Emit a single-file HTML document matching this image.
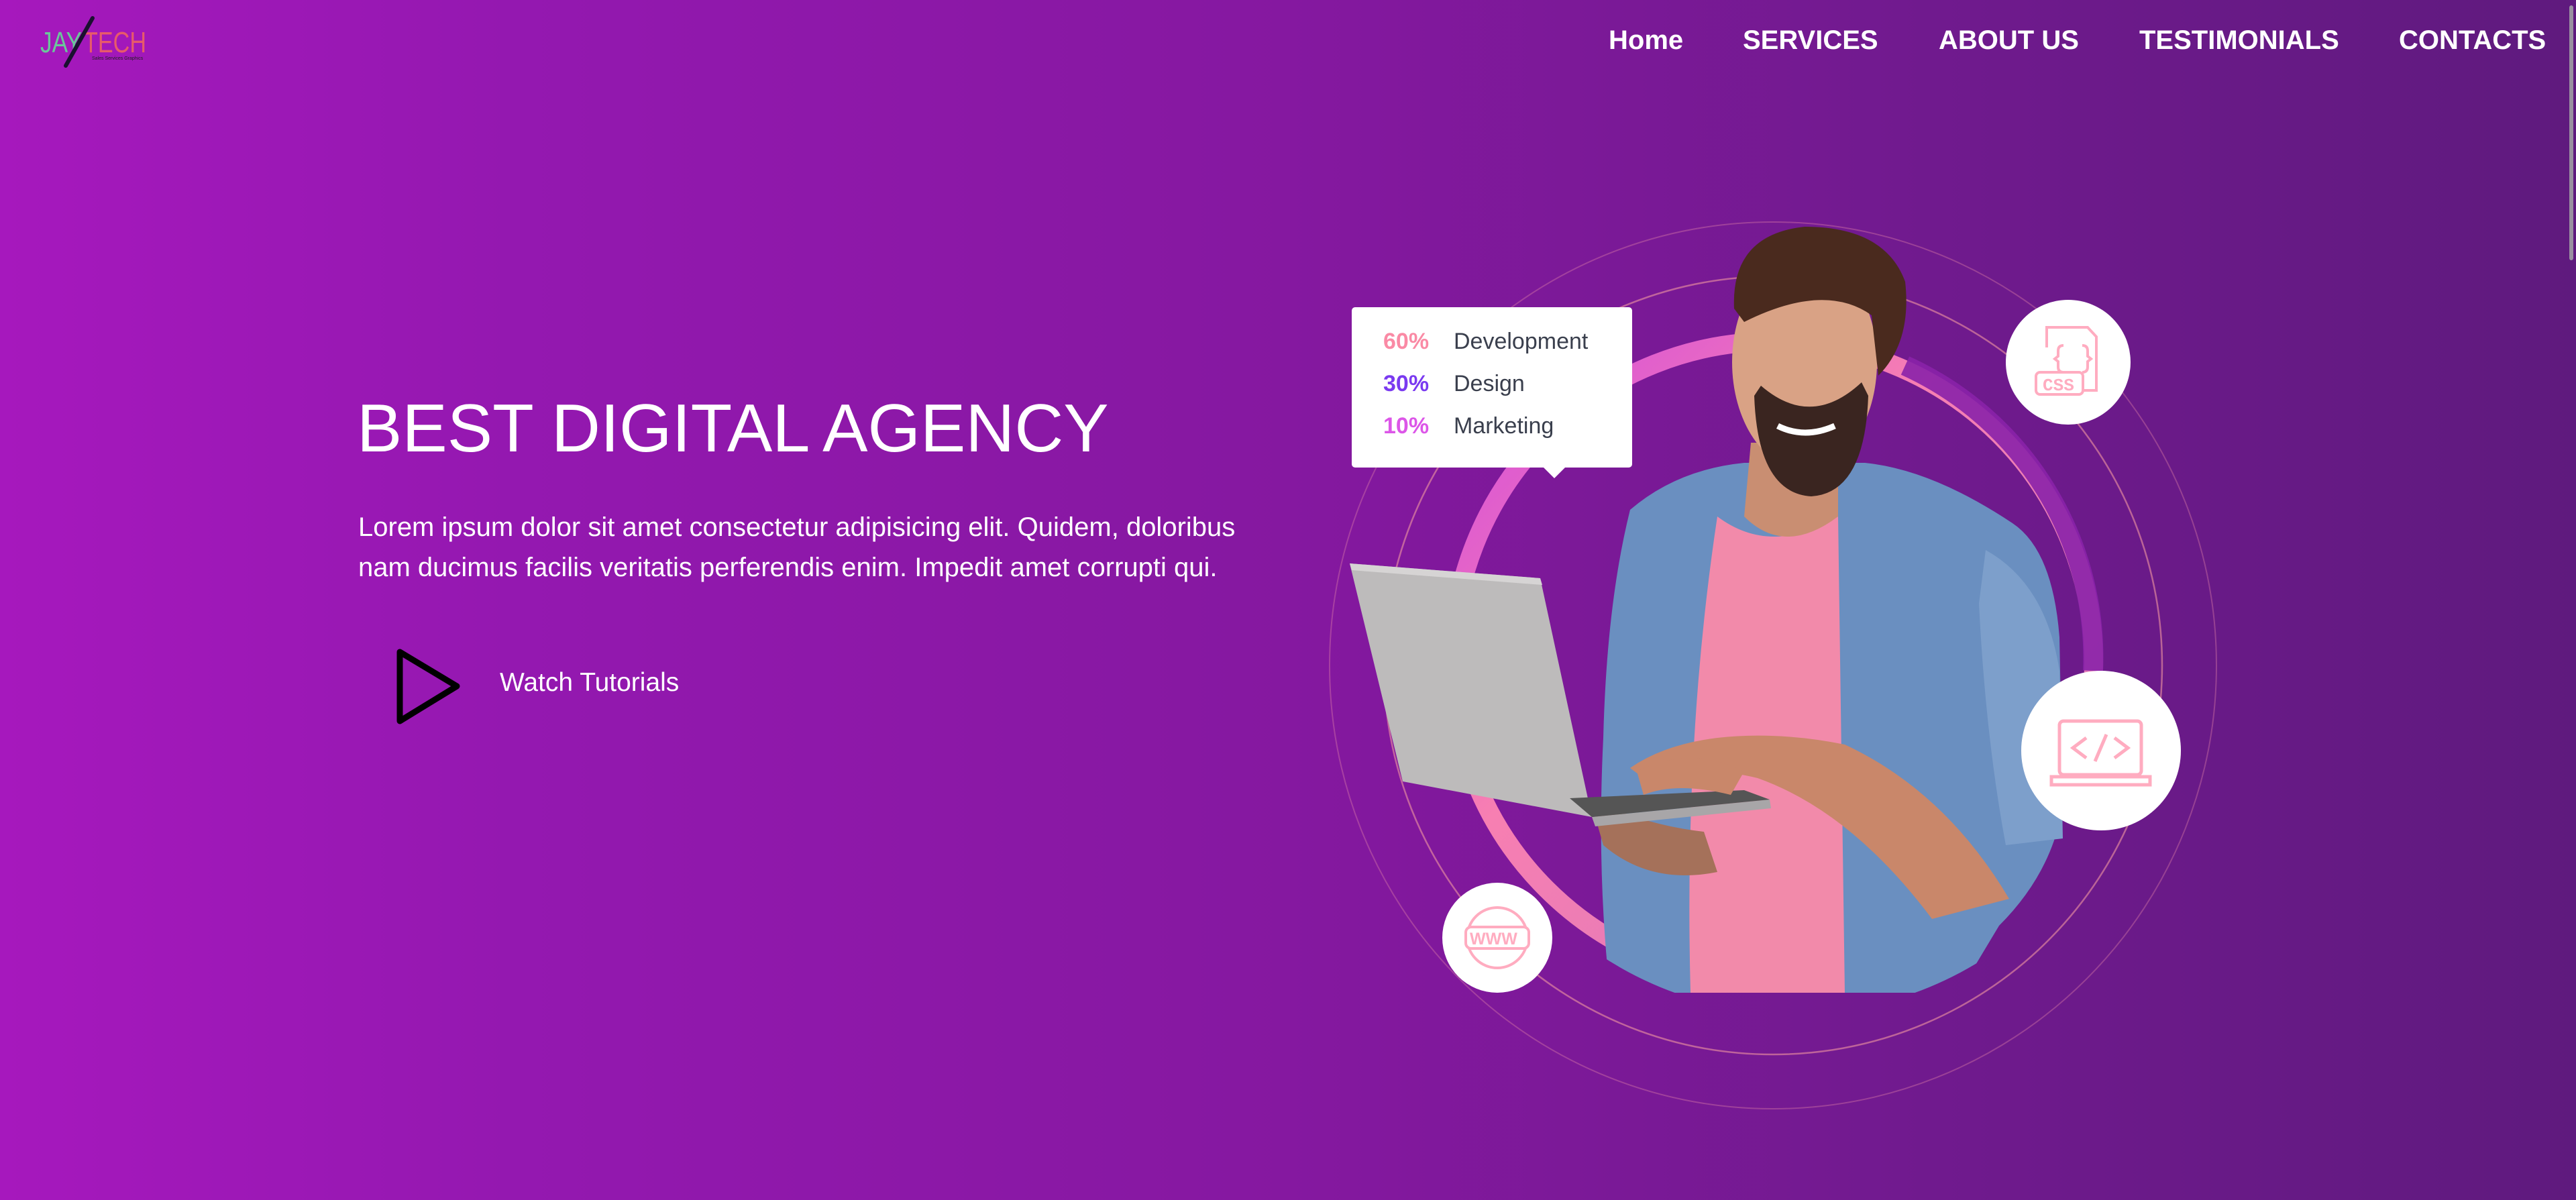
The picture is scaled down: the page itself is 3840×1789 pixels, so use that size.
<!DOCTYPE html>
<html><head><meta charset="utf-8"><style>
html,body{margin:0;padding:0}
body{width:3840px;height:1789px;overflow:hidden;position:relative;font-family:"Liberation Sans",sans-serif;background:linear-gradient(90deg,#a618bd 0%,#9418b0 20%,#8518a0 50%,#701a8e 75%,#5f1a7e 100%);}
.nav{position:absolute;top:38px;color:#fff;font-weight:bold;font-size:40px;}
h1{position:absolute;left:532px;top:582px;margin:0;font-weight:normal;font-size:101px;color:#fff;white-space:nowrap}
p.d{position:absolute;left:534px;top:756px;margin:0;font-size:40px;line-height:60px;color:#fff;width:1400px}
.wt{position:absolute;left:745px;top:996px;font-size:39px;color:#fff}
.card{position:absolute;left:2015px;top:458px;width:418px;height:239px;background:#fff;border-radius:5px}
.card div{position:absolute;left:47px;font-size:34px;color:#3a3f4d}
.card b{display:inline-block;width:105px}
.scrollbar{position:absolute;right:4px;top:8px;width:6px;height:380px;background:#9a90a0;border-radius:3px}
</style></head><body>
<svg style="position:absolute;left:0;top:0" width="260" height="120">
<text x="60" y="78" font-family="Liberation Sans" font-size="44" fill="#6ac79a" textLength="62" lengthAdjust="spacingAndGlyphs">JAY</text>
<text x="125" y="78" font-family="Liberation Sans" font-size="44" fill="#e85a6a" textLength="93" lengthAdjust="spacingAndGlyphs">TECH</text>
<text x="137" y="89" font-family="Liberation Sans" font-size="7" fill="#222">Sales Services Graphics</text>
<line x1="138" y1="27" x2="98" y2="98" stroke="#1a1030" stroke-width="6" stroke-linecap="round"/>
</svg>
<div class="nav" style="left:2398px">Home</div>
<div class="nav" style="left:2598px">SERVICES</div>
<div class="nav" style="left:2890px">ABOUT US</div>
<div class="nav" style="left:3189px">TESTIMONIALS</div>
<div class="nav" style="left:3576px">CONTACTS</div>
<div class="scrollbar"></div>

<h1>BEST DIGITAL AGENCY</h1>
<p class="d">Lorem ipsum dolor sit amet consectetur adipisicing elit. Quidem, doloribus<br>nam ducimus facilis veritatis perferendis enim. Impedit amet corrupti qui.</p>
<svg style="position:absolute;left:585px;top:960px" width="110" height="130"><path d="M11 12 L11 115 L96 63 Z" fill="none" stroke="#000" stroke-width="9" stroke-linejoin="round"/></svg>
<div class="wt">Watch Tutorials</div>

<svg style="position:absolute;left:1900px;top:250px" width="1500" height="1500" viewBox="1900 250 1500 1500">
<defs>
<clipPath id="cp"><path d="M2100 250 H3200 V987 A492 492 0 0 1 2151 987 Z"/></clipPath>
<linearGradient id="rg" x1="0" y1="0" x2="1" y2="1">
<stop offset="0" stop-color="#d24ade"/><stop offset="0.4" stop-color="#f77fb2"/><stop offset="0.75" stop-color="#e27ab8"/><stop offset="1" stop-color="#7a2ed0"/></linearGradient>
</defs>
<circle cx="2643" cy="992" r="661" fill="none" stroke="rgba(235,140,170,0.35)" stroke-width="2"/>
<circle cx="2643" cy="992" r="580" fill="none" stroke="rgba(240,150,160,0.6)" stroke-width="2.5"/>
<circle cx="2643" cy="987" r="478" fill="none" stroke="url(#rg)" stroke-width="28"/>
<path d="M2840 545 A478 478 0 0 1 3120 1000" fill="none" stroke="#8a22a8" stroke-width="30" opacity="0.9"/>
<g clip-path="url(#cp)">
<path d="M2430 760 Q2500 700 2600 690 L2780 690 Q2880 700 3000 780 Q3060 820 3070 950 L3075 1200 Q3060 1300 2980 1380 L2920 1480 L2400 1480 Q2380 1300 2390 1100 Q2395 900 2430 760 Z" fill="#6a8fc0"/>
<path d="M2960 820 Q3050 870 3070 1000 L3075 1250 L2990 1260 Q2960 1100 2950 900 Z" fill="#7d9fcb"/>
<path d="M2560 770 Q2640 830 2740 770 L2750 1480 L2520 1480 Q2510 1100 2560 770 Z" fill="#f28aaa"/>
<path d="M2610 660 L2740 660 L2740 770 Q2660 830 2600 770 Z" fill="#c98e72"/>
<ellipse cx="2690" cy="540" rx="108" ry="160" fill="#d9a285"/>
<path d="M2615 590 Q2620 735 2700 740 Q2780 735 2785 590 L2775 570 Q2700 640 2625 575 Z" fill="#3a2520"/>
<path d="M2650 635 Q2690 655 2735 635" stroke="#fff" stroke-width="9" fill="none"/>
<path d="M2585 460 Q2580 350 2690 338 Q2810 338 2840 420 Q2850 510 2800 560 L2790 470 Q2720 420 2600 480 Z" fill="#4a2a1e"/>
<path d="M2995 1340 Q2900 1180 2750 1110 Q2650 1090 2560 1100 Q2480 1110 2430 1145 L2450 1160 Q2540 1140 2620 1160 Q2760 1210 2880 1370 Z" fill="#c9876a"/>
<path d="M2370 1190 Q2450 1230 2540 1240 L2560 1300 Q2460 1320 2390 1260 Z" fill="#a5715a"/>
</g>
<path d="M2012 840 L2296 862 L2373 1218 L2091 1165 Z" fill="#bdbbbb"/>
<path d="M2012 840 L2296 862 L2299 872 L2015 850 Z" fill="#d6d4d4"/>
<path d="M2373 1218 L2638 1192 L2640 1205 L2378 1232 Z" fill="#a8a6a8"/>
<path d="M2340 1190 L2600 1178 L2638 1192 L2373 1218 Z" fill="#555"/>
<path d="M2440 1150 Q2520 1110 2600 1150 L2580 1185 Q2500 1165 2450 1185 Z" fill="#c9876a"/>
<circle cx="3083" cy="540" r="93" fill="#fff"/>
<g fill="none" stroke="#ffacc0" stroke-width="4">
<path d="M3051 518 V488 H3112 L3125 502 V582 H3105"/><rect x="3035" y="555" width="70" height="33" rx="6"/>
<path d="M3076 515 q-8 0 -8 8 v8 l-5 4 l5 4 v8 q0 8 8 8 M3104 515 q8 0 8 8 v8 l5 4 l-5 4 v8 q0 8 -8 8"/>
</g>
<text x="3045" y="582" font-family="Liberation Mono" font-weight="bold" font-size="26" fill="#ffacc0">CSS</text>
<circle cx="3132" cy="1119" r="119" fill="#fff"/>
<g fill="none" stroke="#ffacc0" stroke-width="5">
<rect x="3070" y="1075" width="122" height="80" rx="6"/><path d="M3058 1158 H3205 V1170 H3058 Z"/>
<path d="M3110 1100 L3090 1115 L3110 1130 M3152 1100 L3172 1115 L3152 1130 M3140 1095 L3123 1135"/>
</g>
<circle cx="2232" cy="1398" r="82" fill="#fff"/>
<g fill="none" stroke="#ffacc0" stroke-width="4">
<circle cx="2232" cy="1398" r="45"/><rect x="2185" y="1382" width="94" height="32" rx="8" fill="#fff"/>
</g>
<text x="2191" y="1408" font-family="Liberation Sans" font-weight="bold" font-size="25" fill="#ffacc0">WWW</text>
</svg>

<div class="card">
<div style="top:32px"><b style="color:#fa8aa5">60%</b>Development</div>
<div style="top:95px"><b style="color:#7a3af0">30%</b>Design</div>
<div style="top:158px"><b style="color:#dc56e8">10%</b>Marketing</div>
</div>
<div style="position:absolute;left:2300px;top:696px;width:0;height:0;border-left:17px solid transparent;border-right:17px solid transparent;border-top:17px solid #fff"></div>
</body></html>
